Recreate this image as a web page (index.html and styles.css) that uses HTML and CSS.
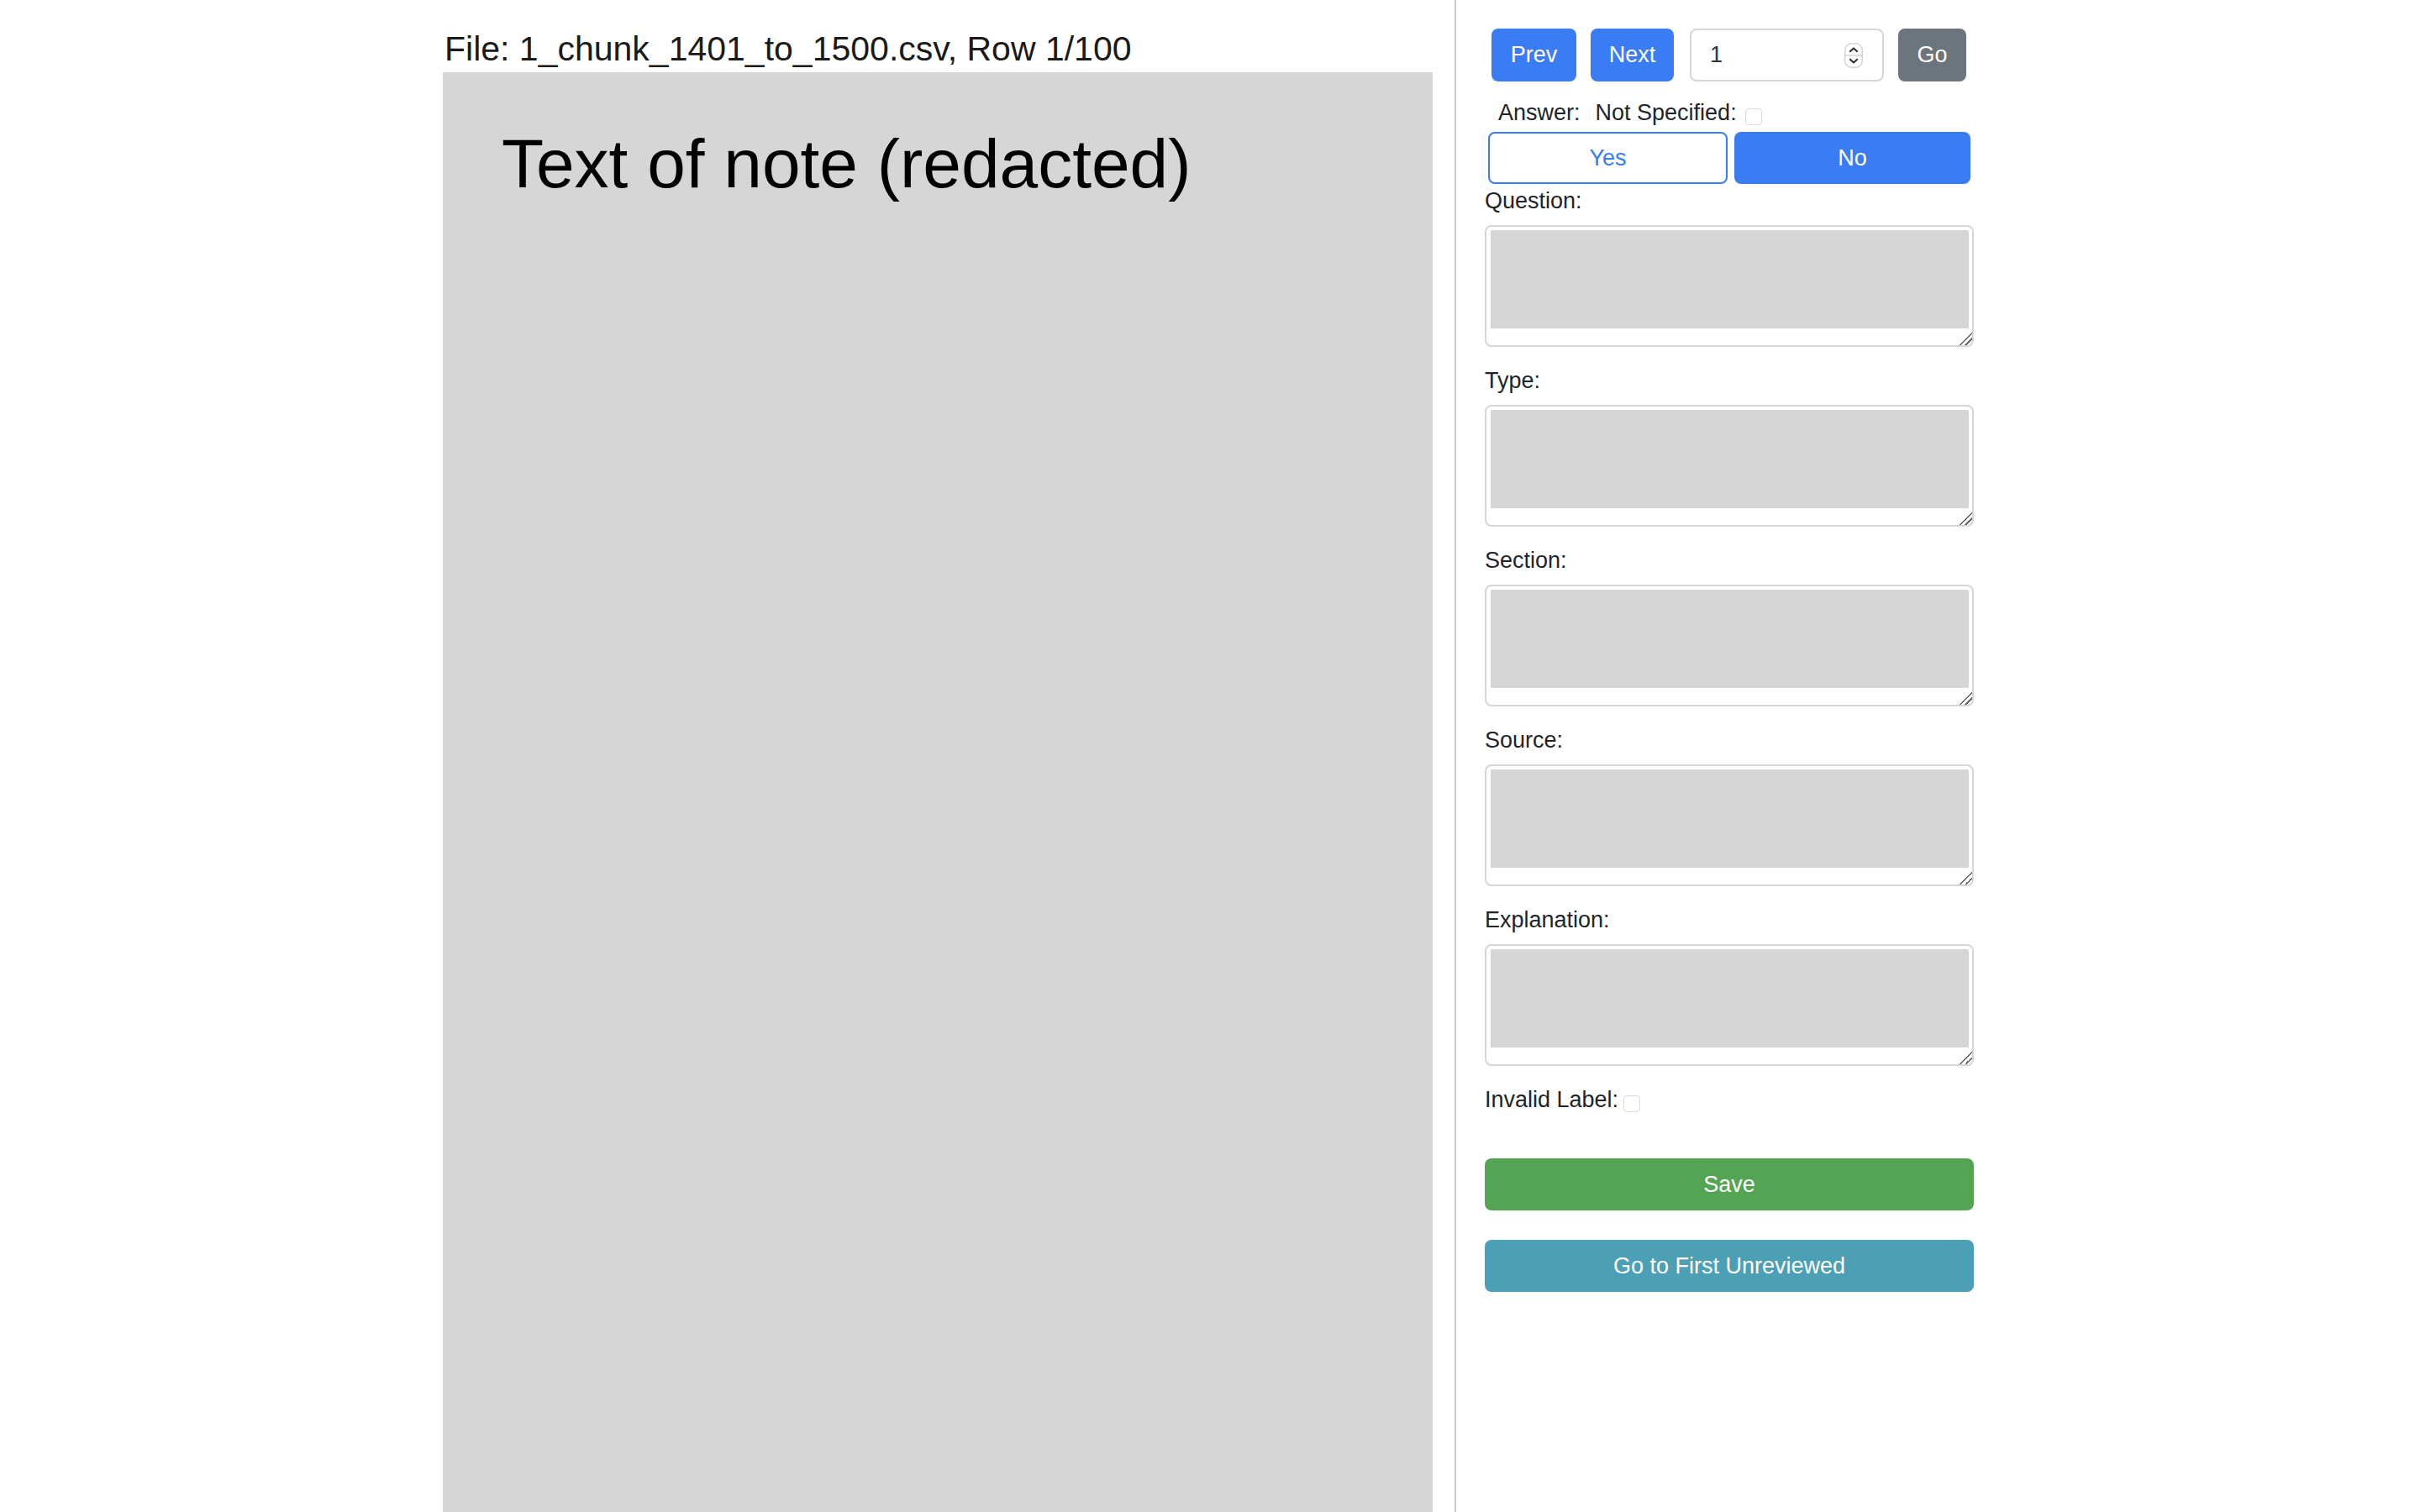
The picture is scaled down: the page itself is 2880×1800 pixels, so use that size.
FILE: index.html
```html
<!DOCTYPE html>
<html lang="en">
<head>
<meta charset="utf-8">
<title>Note review</title>
<link rel="stylesheet" href="styles.css">
</head>
<body>
<div class="app">
  <main class="note-col">
    <h1 class="file-title">File: 1_chunk_1401_to_1500.csv, Row 1/100</h1>
    <div class="note-box">
      <p class="note-text">Text of note (redacted)</p>
    </div>
  </main>
  <aside class="side">
    <div class="nav-row">
      <button class="btn btn-blue btn-prev">Prev</button>
      <button class="btn btn-blue btn-next">Next</button>
      <div class="num-field">
        <input class="num-input" type="text" value="1">
        <svg class="spin" width="22" height="30" viewBox="0 0 22 30" aria-hidden="true">
          <rect x="0.75" y="0.75" width="20.5" height="28.5" rx="8" fill="#fff" stroke="#d4d4d4" stroke-width="1.5"/>
          <line x1="1" y1="15" x2="21" y2="15" stroke="#d4d4d4" stroke-width="1.5"/>
          <path d="M6.8 10.2 L11 6.4 L15.2 10.2" fill="none" stroke="#2b2b2b" stroke-width="2" stroke-linecap="round" stroke-linejoin="round"/>
          <path d="M6.8 19.8 L11 23.6 L15.2 19.8" fill="none" stroke="#2b2b2b" stroke-width="2" stroke-linecap="round" stroke-linejoin="round"/>
        </svg>
      </div>
      <button class="btn btn-gray btn-go">Go</button>
    </div>
    <div class="answer-row">
      <span class="answer-label">Answer:</span>
      <span class="ns-label">Not Specified:</span>
      <span class="check check-ns"></span>
    </div>
    <div class="yn-row">
      <button class="btn btn-outline">Yes</button>
      <button class="btn btn-blue">No</button>
    </div>
    <label class="field-label">Question:</label>
    <textarea class="field"></textarea>
    <label class="field-label">Type:</label>
    <textarea class="field"></textarea>
    <label class="field-label">Section:</label>
    <textarea class="field"></textarea>
    <label class="field-label">Source:</label>
    <textarea class="field"></textarea>
    <label class="field-label">Explanation:</label>
    <textarea class="field"></textarea>
    <div class="invalid-row">
      <span class="invalid-label">Invalid Label:</span>
      <span class="check check-invalid"></span>
    </div>
    <button class="btn btn-wide btn-green">Save</button>
    <button class="btn btn-wide btn-teal">Go to First Unreviewed</button>
  </aside>
</div>
</body>
</html>
```
FILE: styles.css
```css
* {
  box-sizing: border-box;
}

html, body {
  margin: 0;
  padding: 0;
  background: #ffffff;
}

body {
  font-family: "Liberation Sans", Arial, Helvetica, sans-serif;
  color: #212529;
}

.app {
  display: flex;
  justify-content: center;
  height: 100vh;
  overflow: hidden;
}

.note-col {
  width: 1178px;
  display: flex;
  flex-direction: column;
}

.file-title {
  margin: 35px 0 4px 2px;
  font-size: 41px;
  line-height: 47px;
  font-weight: 400;
  color: #1a1a1a;
}

.note-box {
  flex: 1;
  background: #d6d6d6;
  padding: 62px 70px 0 70px;
}

.note-text {
  margin: 0;
  font-size: 82px;
  line-height: 94px;
  color: #000;
}

.side {
  margin-left: 26px;
  border-left: 2px solid #cccccc;
  padding: 34px 4px 0 34px;
  width: 622px;
  display: flex;
  flex-direction: column;
}

.btn {
  font-family: "Liberation Sans", Arial, Helvetica, sans-serif;
  font-size: 27px;
  border: 0;
  border-radius: 8px;
  color: #fff;
  height: 63px;
  padding: 0;
  cursor: pointer;
}

.btn-blue {
  background: #3a7cf3;
}

.btn-gray {
  background: #6c757d;
}

.nav-row {
  display: flex;
  align-items: center;
  margin-left: 8px;
}

.btn-prev {
  width: 101px;
  margin-right: 17px;
}

.btn-next {
  width: 99px;
  margin-right: 19px;
}

.btn-go {
  width: 81px;
  margin-left: 17px;
}

.num-field {
  width: 231px;
  height: 63px;
  border: 2px solid #d3d6da;
  border-radius: 8px;
  display: flex;
  align-items: center;
  padding: 0 23px 0 22px;
  background: #fff;
}

.num-input {
  flex: 1;
  min-width: 0;
  border: 0;
  outline: none;
  padding: 0;
  font-family: "Liberation Sans", Arial, Helvetica, sans-serif;
  font-size: 27px;
  color: #333;
  background: transparent;
}

.spin {
  display: block;
  flex: none;
}

.answer-row {
  margin: 21px 0 0 16px;
  font-size: 27px;
  line-height: 32px;
  display: flex;
  align-items: center;
}

.ns-label {
  margin-left: 18px;
}

.check {
  display: inline-block;
  width: 20px;
  height: 20px;
  border: 1.5px solid #d9d9d9;
  border-radius: 4px;
  background: #fff;
  margin-left: 7px;
  position: relative;
  top: 5px;
}

.check-ns {
  margin-left: 10px;
}

.yn-row {
  display: flex;
  gap: 8px;
  padding: 0 4px;
  margin-top: 7px;
}

.yn-row .btn {
  flex: 1;
  height: 62px;
}

.btn-outline {
  background: #fff;
  color: #3a7cf3;
  border: 2px solid #3a7cf3;
}

.field-label {
  display: block;
  font-size: 27px;
  line-height: 32px;
  margin-top: 24px;
}

.yn-row + .field-label {
  margin-top: 4px;
}

.field {
  display: block;
  width: 582px;
  height: 145px;
  margin-top: 13px;
  border: 2px solid #d3d6da;
  border-radius: 8px;
  padding: 4px 4px 20px 5px;
  background: #d5d5d5;
  background-clip: content-box;
  resize: vertical;
  font-family: "Liberation Sans", Arial, Helvetica, sans-serif;
  font-size: 27px;
}

.field::-webkit-resizer {
  background: linear-gradient(135deg,
    transparent 0%, transparent 48%,
    #6a6a6a 48%, #6a6a6a 56%,
    transparent 56%, transparent 70%,
    #6a6a6a 70%, #6a6a6a 78%,
    transparent 78%);
}

.invalid-row {
  margin-top: 24px;
  font-size: 27px;
  line-height: 32px;
  display: flex;
  align-items: center;
}

.check-invalid {
  margin-left: 6px;
}

.btn-wide {
  width: 582px;
  height: 62px;
}

.btn-green {
  background: #53a553;
  margin-top: 54px;
}

.btn-teal {
  background: #4ba0b6;
  margin-top: 35px;
}
```
